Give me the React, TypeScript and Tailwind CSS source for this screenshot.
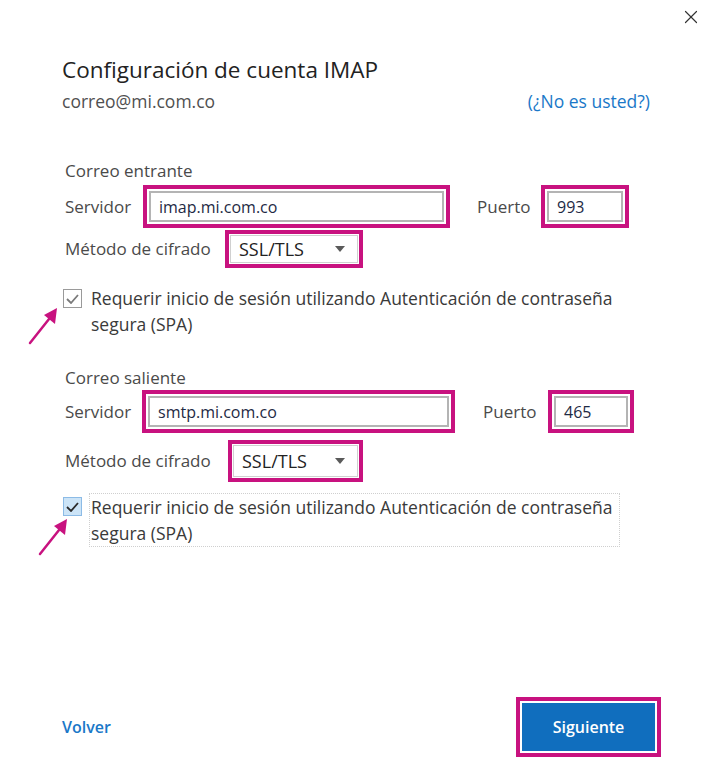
import { X } from 'lucide-react'

const MAG = 'border-[4px] border-[#c8127f]'

function Field({ value, w }: { value: string; w: string }) {
  return (
    <div className={`${MAG} ${w} h-[43px] p-[2px] bg-white`}>
      <div className="h-full border-2 border-[#b4b4b4] flex items-center px-2 text-[16px] text-[#1e2a44]">
        {value}
      </div>
    </div>
  )
}

function Select({ w, h }: { w: string; h: string }) {
  return (
    <div className={`${MAG} ${w} ${h} p-[1px] bg-white`}>
      <div className="h-full border border-[#d0d0d0] flex items-center justify-between pl-2 pr-3 text-[18px] text-[#222]">
        <span>SSL/TLS</span>
        <svg width="10" height="6" viewBox="0 0 10 6"><path d="M0 0h10L5 6z" fill="#5a5a5a" /></svg>
      </div>
    </div>
  )
}

function Check({ checked }: { checked?: boolean }) {
  return (
    <div
      className={
        checked
          ? 'w-[19px] h-[19px] border border-[#8cbbe6] bg-[#cce4f7] flex items-center justify-center shrink-0'
          : 'w-[19px] h-[19px] border border-[#9a9a9a] bg-white flex items-center justify-center shrink-0'
      }
    >
      <svg width="13" height="10" viewBox="0 0 13 10">
        <path d="M1 5l4 4 7-8" fill="none" stroke={checked ? '#2a2a2a' : '#7a7a7a'} strokeWidth="1.8" />
      </svg>
    </div>
  )
}

function Arrow({ className }: { className: string }) {
  return (
    <svg className={className} width="34" height="40" viewBox="0 0 34 40">
      <path d="M3 37L26 8" stroke="#c8127f" strokeWidth="2.5" strokeLinecap="round" />
      <path d="M30 2L17 9l11 9z" fill="#c8127f" />
    </svg>
  )
}

export default function App() {
  return (
    <div className="relative w-[720px] h-[769px] bg-white font-['Open_Sans',sans-serif] text-[#4a4a4a]">
      <div className="flex justify-end pt-[6px] pr-[18px]">
        <X size={22} strokeWidth={1.3} className="text-[#333]" />
      </div>

      <div className="pl-[62px] pr-[70px]">
        <h1 className="mt-[28px] text-[22.5px] leading-[28px] text-[#222]">Configuración de cuenta IMAP</h1>
        <div className="mt-[6px] flex justify-between text-[17.5px] leading-[22px]">
          <span className="text-[#505050]">correo@mi.com.co</span>
          <span className="text-[#1a78c8]">(¿No es usted?)</span>
        </div>
      </div>

      <div className="pl-[65px] mt-[49px] text-[17px]">
        <div className="leading-[20px]">Correo entrante</div>
        <div className="flex items-center mt-[4px]">
          <span className="w-[78px]">Servidor</span>
          <Field value="imap.mi.com.co" w="w-[307px]" />
          <span className="ml-[27px] w-[64px]">Puerto</span>
          <Field value="993" w="w-[88px]" />
        </div>
        <div className="flex items-center mt-[2px]">
          <span className="w-[160px]">Método de cifrado</span>
          <Select w="w-[138px]" h="h-[38px]" />
        </div>
        <div className="flex items-start -ml-[2px] mt-[17px] text-[17.5px] leading-[26px]">
          <div className="pt-[4px]"><Check /></div>
          <div className="ml-[9px] w-[550px] text-[#3a3a3a]">
            Requerir inicio de sesión utilizando Autenticación de contraseña segura (SPA)
          </div>
        </div>

        <div className="leading-[20px] mt-[31px]">Correo saliente</div>
        <div className="flex items-center mt-[2px]">
          <span className="w-[77px]">Servidor</span>
          <Field value="smtp.mi.com.co" w="w-[313px]" />
          <span className="ml-[28px] w-[65px]">Puerto</span>
          <Field value="465" w="w-[86px]" />
        </div>
        <div className="flex items-center mt-[7px]">
          <span className="w-[163px]">Método de cifrado</span>
          <Select w="w-[135px]" h="h-[42px]" />
        </div>
        <div className="flex items-start -ml-[2px] mt-[11px] text-[17.5px] leading-[26px]">
          <div className="pt-[4px]"><Check checked /></div>
          <div className="ml-[7px] w-[531px] border border-dotted border-[#cfcfcf] pl-[1px] text-[#3a3a3a]">
            Requerir inicio de sesión utilizando Autenticación de contraseña segura (SPA)
          </div>
        </div>
      </div>

      <div className="absolute left-0 right-0 bottom-[12px] flex items-center justify-between pl-[62px] pr-[59px]">
        <span className="text-[16px] font-semibold text-[#1a78c8]">Volver</span>
        <div className="border-[4px] border-[#c8127f] p-[2px]">
          <button className="w-[133px] h-[48px] bg-[#106ebe] text-white text-[16px] font-semibold">Siguiente</button>
        </div>
      </div>

      <Arrow className="absolute left-[27px] top-[306px]" />
      <Arrow className="absolute left-[37px] top-[517px]" />
    </div>
  )
}
